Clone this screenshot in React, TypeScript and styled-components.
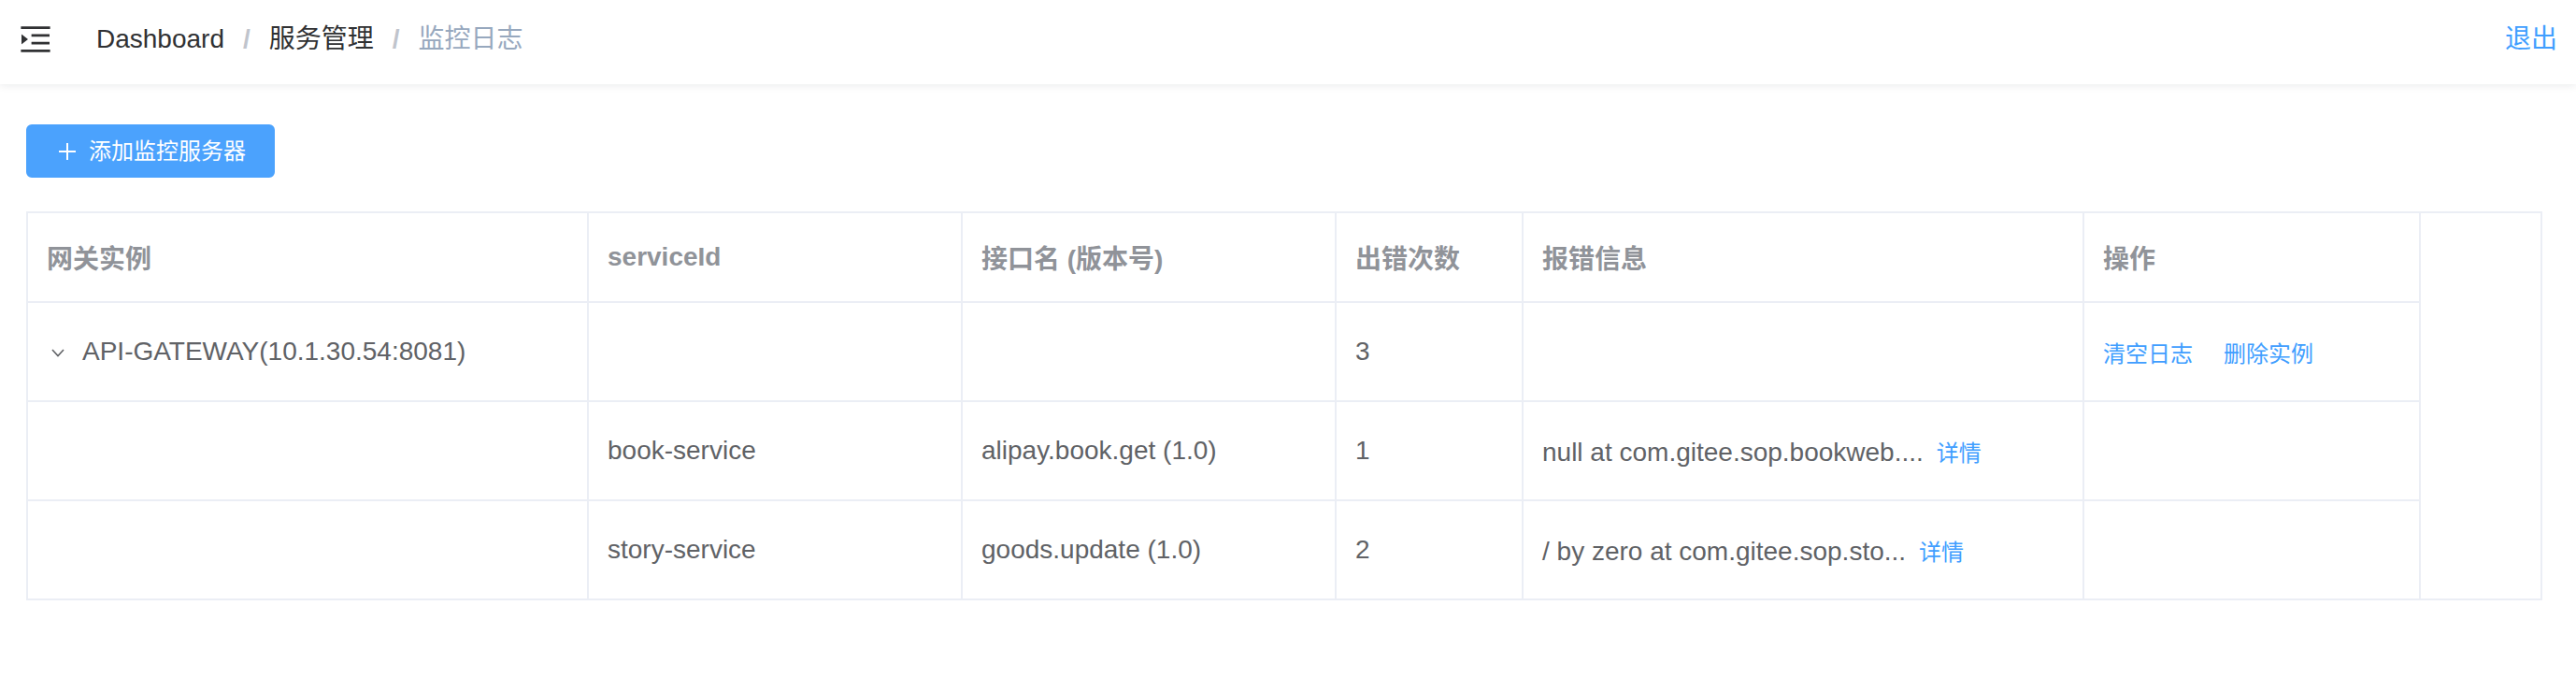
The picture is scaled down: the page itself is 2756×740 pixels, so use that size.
import React from "react";
import styled, { createGlobalStyle } from "styled-components";

const GlobalStyle = createGlobalStyle`
  html, body { margin: 0; padding: 0; background: #ffffff; }
  body {
    font-family: "Liberation Sans", "Noto Sans CJK SC", sans-serif;
    -webkit-font-smoothing: antialiased;
  }
  * { box-sizing: border-box; }
`;

const Page = styled.div`
  width: 2756px;
  min-height: 740px;
  background: #ffffff;
`;

const Navbar = styled.header`
  position: relative;
  z-index: 1;
  height: 90px;
  display: flex;
  align-items: center;
  padding: 0 20px 6px 18px;
  background: #ffffff;
  box-shadow: 0 2px 8px rgba(0, 21, 41, 0.08);
`;

const Hamburger = styled.svg`
  width: 40px;
  height: 40px;
  fill: #303133;
  flex: none;
`;

const Breadcrumb = styled.nav`
  display: flex;
  align-items: center;
  margin-left: 45px;
  font-size: 28px;
  line-height: 40px;
`;

const Crumb = styled.span<{ $current?: boolean }>`
  color: ${(p) => (p.$current ? "#97a8be" : "#303133")};
`;

const Sep = styled.span`
  margin: 0 20px;
  color: #c0c4cc;
  font-weight: 700;
`;

const Logout = styled.a`
  margin-left: auto;
  font-size: 28px;
  line-height: 40px;
  color: #409eff;
  cursor: pointer;
`;

const Main = styled.main`
  padding: 43px 36px 0 28px;
`;

const Toolbar = styled.div`
  display: flex;
  margin-bottom: 36px;
`;

const PrimaryButton = styled.button`
  display: inline-flex;
  align-items: center;
  height: 57px;
  padding: 0 29px 0 33px;
  border: 2px solid #4ba2fd;
  border-radius: 6px;
  background: #4ba2fd;
  color: #ffffff;
  font-family: inherit;
  font-size: 24px;
  line-height: 1;
  cursor: pointer;
`;

const PlusIcon = styled.svg`
  width: 18px;
  height: 18px;
  margin-right: 14px;
  stroke: #ffffff;
  stroke-width: 2;
  flex: none;
`;

const TableWrap = styled.div`
  border: 2px solid #ebeef5;
`;

const Table = styled.table`
  width: 2560px;
  table-layout: fixed;
  border-collapse: separate;
  border-spacing: 0;
`;

const Th = styled.th`
  height: 96px;
  padding: 0 20px;
  text-align: left;
  vertical-align: middle;
  font-size: 28px;
  font-weight: 700;
  color: #909399;
  border-right: 2px solid #ebeef5;
  border-bottom: 2px solid #ebeef5;
  white-space: nowrap;
`;

const Td = styled.td<{ $last?: boolean }>`
  height: ${(p) => (p.$last ? "104px" : "106px")};
  padding: 0 20px;
  text-align: left;
  vertical-align: middle;
  font-size: 28px;
  color: #606266;
  border-right: 2px solid #ebeef5;
  border-bottom: ${(p) => (p.$last ? "none" : "2px solid #ebeef5")};
  white-space: nowrap;
`;

const CellInner = styled.div`
  display: flex;
  align-items: center;
`;

const ExpandArrow = styled.svg`
  width: 14px;
  height: 9px;
  margin: 2px 19px 0 5px;
  fill: none;
  stroke: #606266;
  stroke-width: 1.6;
  flex: none;
`;

const LinkButton = styled.a<{ $gap?: number }>`
  margin-left: ${(p) => p.$gap ?? 0}px;
  font-size: 24px;
  color: #409eff;
  cursor: pointer;
`;

const columns = [
  { title: "网关实例", width: 600 },
  { title: "serviceId", width: 400 },
  { title: "接口名 (版本号)", width: 400 },
  { title: "出错次数", width: 200 },
  { title: "报错信息", width: 600 },
  { title: "操作", width: 360 },
];

const children = [
  {
    serviceId: "book-service",
    api: "alipay.book.get (1.0)",
    count: "1",
    msg: "null at com.gitee.sop.bookweb....",
  },
  {
    serviceId: "story-service",
    api: "goods.update (1.0)",
    count: "2",
    msg: "/ by zero at com.gitee.sop.sto...",
  },
];

export default function App() {
  return (
    <Page>
      <GlobalStyle />
      <Navbar>
        <Hamburger viewBox="0 0 1024 1024">
          <path d="M408 442h480c4.4 0 8-3.6 8-8v-56c0-4.4-3.6-8-8-8H408c-4.4 0-8 3.6-8 8v56c0 4.4 3.6 8 8 8zm-8 204c0 4.4 3.6 8 8 8h480c4.4 0 8-3.6 8-8v-56c0-4.4-3.6-8-8-8H408c-4.4 0-8 3.6-8 8v56zm504-486H120c-4.4 0-8 3.6-8 8v56c0 4.4 3.6 8 8 8h784c4.4 0 8-3.6 8-8v-56c0-4.4-3.6-8-8-8zm0 632H120c-4.4 0-8 3.6-8 8v56c0 4.4 3.6 8 8 8h784c4.4 0 8-3.6 8-8v-56c0-4.4-3.6-8-8-8zM142.4 642.1L298.7 519a8.840 8.840 0 0 0 0-13.900L142.4 381.900c-5.8-4.600-14.4-.5-14.4 6.900v246.300a8.800 8.800 0 0 0 14.4 7z" />
        </Hamburger>
        <Breadcrumb>
          <Crumb>Dashboard</Crumb>
          <Sep>/</Sep>
          <Crumb>服务管理</Crumb>
          <Sep>/</Sep>
          <Crumb $current>监控日志</Crumb>
        </Breadcrumb>
        <Logout>退出</Logout>
      </Navbar>
      <Main>
        <Toolbar>
          <PrimaryButton>
            <PlusIcon viewBox="0 0 18 18">
              <path d="M9 0v18M0 9h18" />
            </PlusIcon>
            添加监控服务器
          </PrimaryButton>
        </Toolbar>
        <TableWrap>
          <Table>
            <colgroup>
              {columns.map((c) => (
                <col key={c.title} style={{ width: c.width }} />
              ))}
            </colgroup>
            <thead>
              <tr>
                {columns.map((c) => (
                  <Th key={c.title}>{c.title}</Th>
                ))}
              </tr>
            </thead>
            <tbody>
              <tr>
                <Td>
                  <CellInner>
                    <ExpandArrow viewBox="0 0 14 9">
                      <polyline points="1,1 7,7.5 13,1" />
                    </ExpandArrow>
                    API-GATEWAY(10.1.30.54:8081)
                  </CellInner>
                </Td>
                <Td />
                <Td />
                <Td>3</Td>
                <Td />
                <Td>
                  <LinkButton>清空日志</LinkButton>
                  <LinkButton $gap={33}>删除实例</LinkButton>
                </Td>
              </tr>
              {children.map((r, i) => {
                const last = i === children.length - 1;
                return (
                  <tr key={r.serviceId}>
                    <Td $last={last} />
                    <Td $last={last}>{r.serviceId}</Td>
                    <Td $last={last}>{r.api}</Td>
                    <Td $last={last}>{r.count}</Td>
                    <Td $last={last}>
                      {r.msg}
                      <LinkButton $gap={14}>详情</LinkButton>
                    </Td>
                    <Td $last={last} />
                  </tr>
                );
              })}
            </tbody>
          </Table>
        </TableWrap>
      </Main>
    </Page>
  );
}
